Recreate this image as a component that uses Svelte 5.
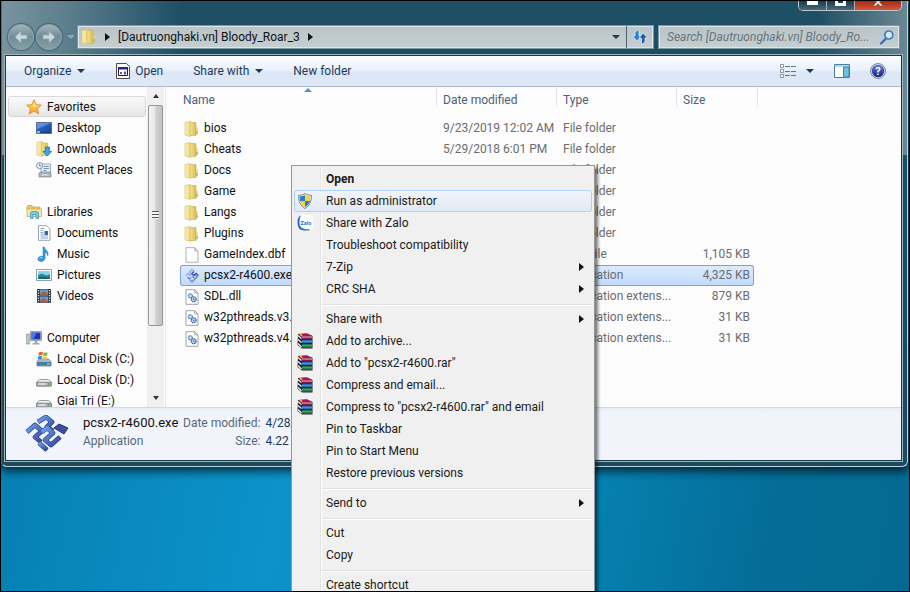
<script lang="ts">
  type NavItem = { label: string; icon: string };
  type NavGroup = NavItem & { active?: boolean; children: NavItem[] };
  type FileRow = { name: string; icon: string; date?: string; type: string; size?: string };
  type MenuItem = { label: string; icon?: string; bold?: boolean; submenu?: boolean };

  const navGroups: NavGroup[] = [
    {
      label: "Favorites",
      icon: "star",
      active: true,
      children: [
        { label: "Desktop", icon: "desktop" },
        { label: "Downloads", icon: "downloads" },
        { label: "Recent Places", icon: "recent" },
      ],
    },
    {
      label: "Libraries",
      icon: "libraries",
      children: [
        { label: "Documents", icon: "documents" },
        { label: "Music", icon: "music" },
        { label: "Pictures", icon: "pictures" },
        { label: "Videos", icon: "videos" },
      ],
    },
    {
      label: "Computer",
      icon: "computer",
      children: [
        { label: "Local Disk (C:)", icon: "system-disk" },
        { label: "Local Disk (D:)", icon: "disk" },
        { label: "Giai Tri (E:)", icon: "disk" },
      ],
    },
  ];

  const files: FileRow[] = [
    { name: "bios", icon: "folder", date: "9/23/2019 12:02 AM", type: "File folder" },
    { name: "Cheats", icon: "folder", date: "5/29/2018 6:01 PM", type: "File folder" },
    { name: "Docs", icon: "folder", type: "File folder" },
    { name: "Game", icon: "folder", type: "File folder" },
    { name: "Langs", icon: "folder", type: "File folder" },
    { name: "Plugins", icon: "folder", type: "File folder" },
    { name: "GameIndex.dbf", icon: "file", type: "DBF File", size: "1,105 KB" },
    { name: "pcsx2-r4600.exe", icon: "pcsx", type: "Application", size: "4,325 KB" },
    { name: "SDL.dll", icon: "dll", type: "Application extens...", size: "879 KB" },
    { name: "w32pthreads.v3.dll", icon: "dll", type: "Application extens...", size: "31 KB" },
    { name: "w32pthreads.v4.dll", icon: "dll", type: "Application extens...", size: "31 KB" },
  ];

  const menuGroups: MenuItem[][] = [
    [
      { label: "Open", bold: true },
      { label: "Run as administrator", icon: "shield" },
      { label: "Share with Zalo", icon: "zalo" },
      { label: "Troubleshoot compatibility" },
      { label: "7-Zip", submenu: true },
      { label: "CRC SHA", submenu: true },
    ],
    [
      { label: "Share with", submenu: true },
      { label: "Add to archive...", icon: "rar" },
      { label: 'Add to "pcsx2-r4600.rar"', icon: "rar" },
      { label: "Compress and email...", icon: "rar" },
      { label: 'Compress to "pcsx2-r4600.rar" and email', icon: "rar" },
      { label: "Pin to Taskbar" },
      { label: "Pin to Start Menu" },
      { label: "Restore previous versions" },
    ],
    [{ label: "Send to", submenu: true }],
    [{ label: "Cut" }, { label: "Copy" }],
    [{ label: "Create shortcut" }],
  ];

  let selected = $state("pcsx2-r4600.exe");
  let highlighted = $state("Run as administrator");
  let search = $state("");
</script>

{#snippet icon(name: string)}
  <svg class="icon" viewBox="0 0 16 16" aria-hidden="true">
    {#if name === "folder"}
      <path d="M1 1.5l5-1 1 1v13l-1 1-5-1.5z" fill="url(#folder-light)" stroke="#d9bd5e" stroke-width=".6" />
      <path d="M6 1.500h6v13H6z" fill="url(#folder-dark)" stroke="#ceb04e" stroke-width=".6" />
      <path d="M12 6.5h1.600v7H12z" fill="#e4cc70" />
      <path d="M12.500 10h1v3h-1z" fill="#7fb27a" />
    {:else if name === "file"}
      <path d="M2 .7h8.6L14 4v11.3H2z" fill="#fff" stroke="#9a9a9a" stroke-width=".8" />
      <path d="M10.6.7V4H14z" fill="#e6e6e6" stroke="#9a9a9a" stroke-width=".6" />
    {:else if name === "dll"}
      <path d="M2 .7h8.6L14 4v11.3H2z" fill="#fff" stroke="#8d8d8d" stroke-width=".8" />
      <path d="M10.6.7V4H14z" fill="#e6e6e6" stroke="#8d8d8d" stroke-width=".6" />
      <circle cx="6.3" cy="6.8" r="2" fill="#cfe0f1" stroke="#3f6fa5" stroke-width="1.1" stroke-dasharray="1.2 .5" />
      <circle cx="9.7" cy="10.3" r="2.4" fill="#cfe0f1" stroke="#2c5c98" stroke-width="1.3" stroke-dasharray="1.3 .5" />
      <circle cx="9.7" cy="10.3" r=".8" fill="#2c5c98" />
    {:else if name === "pcsx"}
      <g fill="none" stroke-width="1.4">
        <path d="M2 7.5l2-2 2 2 1.5-1.5-2-2L8 1.5l2 2" stroke="#8fb0e2" />
        <path d="M10 3.5L8 5.5l2 2 2-2 2.5 2" stroke="#3850a4" />
        <path d="M3.5 9l2 2L7 9.5M6 12l2 2 5.5-5.5-2-1M8 8l2.5 2.5" stroke="#7688c6" />
      </g>
    {:else if name === "star"}
      <path d="M8 .8l2.1 4.9 5.3.4-4 3.5 1.3 5.3L8 12.1l-4.7 2.8 1.3-5.3-4-3.5 5.3-.4z" fill="url(#star)" stroke="#e2892b" stroke-width=".9" stroke-linejoin="round" />
      <path d="M8 3l1.3 3.6 3.6.3-6 1.4z" fill="#fff3b0" opacity=".8" />
    {:else if name === "desktop"}
      <path d="M.5 2.5h15v11H.5z" fill="url(#screen)" stroke="#5d7089" />
      <path d="M1 3h14L1 9z" fill="#7aa9ee" opacity=".6" />
      <path d="M1 11.5h14V13H1z" fill="#24436d" />
      <path d="M1 11h3v2H1z" fill="#6bc6de" />
    {:else if name === "downloads"}
      <path d="M1 1.5l5-1 1 1v13l-1 1-5-1.5z" fill="url(#folder-light)" stroke="#d9bd5e" stroke-width=".6" />
      <path d="M6 2h5.5v12.5H6z" fill="url(#folder-dark)" stroke="#ceb04e" stroke-width=".6" />
      <path d="M9.3 6h4v4.5h2.2L11.3 15 7 10.5h2.3z" fill="#3aa3ea" stroke="#1b6bb4" stroke-width=".8" />
    {:else if name === "recent"}
      <path d="M5 2h9.5v9H5z" fill="#e9eef3" stroke="#8795a3" stroke-width=".8" />
      <path d="M7.5 4.5h5.5M7.5 6.5h5.5M7.5 8.5h3" stroke="#7396bd" stroke-width="1" />
      <path d="M3 11l2-1h9l1 1v4H3z" fill="#a8b1b8" stroke="#7f8a92" stroke-width=".7" />
      <path d="M5.5 13h7" stroke="#eef2f4" />
      <circle cx="3.6" cy="3.6" r="3" fill="#f3f6f8" stroke="#8493a0" />
      <path d="M3.6 1.8v2h1.5" fill="none" stroke="#4a6b8c" stroke-width=".8" />
    {:else if name === "libraries"}
      <path d="M1 2.5l1-1h4l1 1.5h7v3H1z" fill="#e7c965" stroke="#c2a143" stroke-width=".7" />
      <path d="M1 5h14.5v7.5H1z" fill="#f6e59c" stroke="#c9a94c" stroke-width=".7" />
      <path d="M4.5 14.5V9.5q0-2 2-2h4q2 0 2 2v5h-2.5v-4h-3v4z" fill="#78c7ea" stroke="#3c8fbd" stroke-width=".7" />
    {:else if name === "documents"}
      <path d="M2.5.7h8L14 4v11.3H2.5z" fill="#fff" stroke="#7e8c9b" stroke-width=".8" />
      <path d="M4.5 3.5h4M4.5 5.5h3M4.5 11h7.5M4.5 13h7.5M4.5 7.5h3M4.5 9.2h3" stroke="#7f9bc4" stroke-width=".9" />
      <path d="M8.5 6H12v4H8.5z" fill="#2c69bd" />
    {:else if name === "music"}
      <path d="M8 1c.4 2.6 5 3.8 3.7 8.5C11.5 7 10 6 9 6v6.2C9 14 7.200 15.300 5.200 15.300S2 14.300 2 12.900s1.700-2.600 3.500-2.600c.7 0 1.200.1 1.700.3V1z" fill="#2f9be0" stroke="#1b6fb5" stroke-width=".7" />
      <path d="M3.300 12.500q1-1.400 3-1" fill="none" stroke="#b4e3fb" />
    {:else if name === "pictures"}
      <path d="M.5 2.500h15v11H.5z" fill="#fff" stroke="#8492a0" stroke-width=".9" />
      <path d="M2 4h12v8H2z" fill="#8fd0ea" />
      <path d="M2 8l4-1.500 4 2 4-1v4.500H2z" fill="#2b8c8d" />
      <path d="M2 10.500l6-1 6 1V12H2z" fill="#1a6482" />
    {:else if name === "videos"}
      <path d="M1 1h14v14H1z" fill="#2d3642" />
      <path d="M4 1.500h8v6H4zM4 8.500h8v6H4z" fill="#5d9fd6" />
      <path d="M4 6l4-3 4 3v1.500H4zM4 13l3-3 5 3v1.500H4z" fill="#b25b3f" />
      <path d="M2.500 2v13M13.500 2v13" stroke="#e3e8ec" stroke-width="1.300" stroke-dasharray="1.300 1.200" />
    {:else if name === "computer"}
      <path d="M.7 4h2.600v10H.7z" fill="#c8d2c9" stroke="#7b8d80" stroke-width=".7" />
      <path d="M4.500 1.500h11v9h-11z" fill="#d6dce2" stroke="#8791a0" stroke-width=".8" />
      <path d="M5.500 2.500h9v7h-9z" fill="#1a35b5" />
      <path d="M5.500 2.500h5l-3 7h-2z" fill="#4d77dd" />
      <path d="M8.500 10.500h3v2.500h-3zM6.500 13h7v1.500h-7z" fill="#a3acb5" />
    {:else if name === "system-disk"}
      <path d="M1 10.500L3.500 8h9L15 10.500V15H1z" fill="#aebac3" stroke="#6d7b87" stroke-width=".8" />
      <path d="M1 11h14v3.500H1z" fill="#3f7fa9" />
      <path d="M11 12h3v1.500h-3z" fill="#7fe05f" />
      <path d="M3 1.300q2-1 4 0L6.300 4.500q-2-.8-4 0z" fill="#e8662d" />
      <path d="M7.700 1.300q2 .9 4 0L11 4.500q-2 .9-4 0z" fill="#7dbb3c" />
      <path d="M2.200 5.200q2-.9 4 0L5.500 8.300q-2-.8-4 0z" fill="#3d8be0" />
      <path d="M6.900 5.200q2 .9 4 0l-.7 3.200q-2 .8-4 0z" fill="#f2c230" />
    {:else if name === "disk"}
      <path d="M.8 10L3.500 7.500h9L15.200 10v4H.8z" fill="#eceeef" stroke="#84898d" stroke-width=".8" />
      <path d="M.8 10.300h14.400V14H.8z" fill="#b9bdc0" stroke="#6f7478" stroke-width=".8" />
      <path d="M2.500 11.500h7v1h-7z" fill="#f5f6f6" />
      <path d="M11.500 11h2v2h-2z" fill="#4fae3a" />
    {:else if name === "shield"}
      <path d="M8 .5c2 1.300 4.300 1.800 6.500 1.800 0 6-1.500 10-6.500 13.200C3 12.300 1.500 8.300 1.500 2.300 3.700 2.300 6 1.800 8 .5z" fill="#e4e9ed" stroke="#6f7e89" stroke-width=".9" />
      <path d="M8 2.300v5.700H3C2.800 6.600 2.700 5 2.700 3.400 4.700 3.400 6.400 3 8 2.300z" fill="#2f7cc0" />
      <path d="M8 2.300v5.700h5c.2-1.400.3-3 .3-4.600-2 0-3.700-.4-5.300-1.100z" fill="#f4d43b" />
      <path d="M8 8v6c-2.800-1.700-4.300-3.600-5-6z" fill="#f4d43b" />
      <path d="M8 8v6c2.800-1.700 4.300-3.600 5-6z" fill="#2f7cc0" />
    {:else if name === "zalo"}
      <path d="M3 0h10q3 0 3 3v9q0 3-3 3H5z" fill="#fff" />
      <path d="M3.500.7Q.8 2 .8 7t2 7q4 2.200 10 .8-5-.1-8-1.600Q2 11.500 2 7.200T3.500.7z" fill="#1b62d3" stroke="#1b62d3" stroke-width=".5" />
      <text x="3.500" y="9.500" font-size="5.500" font-weight="700" fill="#2a74e0">Zalo</text>
    {:else if name === "rar"}
      <path d="M1 1l9-.5 5.500 2.500v12.500H5L.5 12z" fill="#26232a" />
      <path d="M1 1l9-.5L15.500 3H5z" fill="#b01258" />
      <path d="M3 .9l2 2" stroke="#f0ca25" stroke-width="1.600" />
      <path d="M5 3.200h10v2.300H5z" fill="#c91d68" />
      <path d="M5 4h10M5 8.300h10M5 12.700h10" stroke="#e8dce6" stroke-width=".7" />
      <path d="M5 6.800h10v1.200H5zM5 8.800h10v1.200H5z" fill="#2670b5" />
      <path d="M5 11.300h10v1.100H5zM5 13.200h10v1.300H5z" fill="#239253" />
      <path d="M1 2.500l3.500 3M1 6.500l3.500 3M1 10.500l3.500 3.500" stroke="#f2f2f2" stroke-width="1.300" />
    {:else if name === "program"}
      <path d="M1.500.5h10l3 3v12h-13z" fill="#fff" stroke="#4d4d4d" />
      <path d="M3.500 4.500h9v8h-9z" fill="#fff" stroke="#171b3f" />
      <path d="M3 4h10v2.500H3z" fill="#1b2a86" />
      <path d="M5 9h2v2H5z" fill="#c93c3c" />
      <path d="M9 8.500h2v3H9z" fill="#2b58be" />
    {:else if name === "views"}
      <path d="M.5 1.500h3v3h-3zM.5 6.500h3v3h-3zM.5 11.500h3v3h-3z" fill="#fff" stroke="#8794a5" />
      <path d="M5 3.500h5M5 8.500h5M5 12.500h5M11 3.500h5M11 8.500h5M11 12.500h5" stroke="#5f7290" />
    {:else if name === "preview"}
      <path d="M.5 1.500h15v13H.5z" fill="#fff" stroke="#4a7fa5" />
      <path d="M1 2h14v2H1z" fill="#bfd6e6" />
      <path d="M9.500 4H15v10H9.500z" fill="#6fc0df" stroke="#3d87ab" />
    {:else if name === "help"}
      <circle cx="8" cy="8" r="7.500" fill="#d5dbe8" stroke="#7c86a0" />
      <circle cx="8" cy="8" r="6.200" fill="url(#help)" />
      <text x="8" y="12" font-size="11" font-weight="700" fill="#fff" text-anchor="middle">?</text>
    {:else if name === "refresh"}
      <path d="M6.500.5L3 3v4H.5L5 12l4.500-5H7V4z" fill="#2f7fd0" stroke="#e8f3fc" stroke-width=".7" />
      <path d="M9.500 15.500l3.500-2.500V9h2.500L11 4 7 9h2.500v3z" fill="#1d5dae" stroke="#e8f3fc" stroke-width=".7" />
    {:else if name === "magnifier"}
      <path d="M7 9.500L2 14.500" stroke="#3d70b7" stroke-width="2.400" stroke-linecap="round" />
      <circle cx="9.800" cy="6" r="4" fill="#d8ecf8" stroke="#3b7cc4" stroke-width="1.700" />
    {/if}
  </svg>
{/snippet}

<svg class="defs" aria-hidden="true">
  <defs>
    <linearGradient id="folder-light" x2="1">
      <stop offset="0" stop-color="#fbf1b6" />
      <stop offset="1" stop-color="#ecd77c" />
    </linearGradient>
    <linearGradient id="folder-dark" x2="1">
      <stop offset="0" stop-color="#f5e596" />
      <stop offset="1" stop-color="#d8b953" />
    </linearGradient>
    <linearGradient id="star" x2="0" y2="1">
      <stop offset="0" stop-color="#ffe36b" />
      <stop offset="1" stop-color="#fb9f26" />
    </linearGradient>
    <linearGradient id="screen" x2="1" y2="1">
      <stop offset="0" stop-color="#3b78d8" />
      <stop offset="1" stop-color="#163f9b" />
    </linearGradient>
    <linearGradient id="help" x2="0" y2="1">
      <stop offset="0" stop-color="#5e7fd6" />
      <stop offset="1" stop-color="#10227e" />
    </linearGradient>
    <linearGradient id="logo" x2="1" y2="1">
      <stop offset="0" stop-color="#6fa3e8" />
      <stop offset="1" stop-color="#33459b" />
    </linearGradient>
  </defs>
</svg>

<main class="desktop">
  <div class="window">
    <div class="title-bar">
      <div class="window-controls">
        <button aria-label="Minimize"><span class="glyph-min"></span></button>
        <button aria-label="Maximize"><span class="glyph-max"></span></button>
        <button class="close" aria-label="Close">
          <svg viewBox="0 0 12 9" width="12" height="9"><path d="M3 0l1.500 1L1 5h3l2-2.500L8 5h3L7.500 1 9 0z" fill="#fff" stroke="#5b4747" stroke-width=".6" /></svg>
        </button>
      </div>
    </div>

    <div class="nav-bar">
      <div class="travel">
        <button class="round" aria-label="Back">
          <svg viewBox="0 0 16 16" width="16" height="16"><path d="M8 2L2 8l6 6v-4h6V6H8z" fill="#c9d6db" stroke="#8fa6af" stroke-width=".8" /></svg>
        </button>
        <button class="round" aria-label="Forward">
          <svg viewBox="0 0 16 16" width="16" height="16"><path d="M8 2l6 6-6 6v-4H2V6h6z" fill="#c9d6db" stroke="#8fa6af" stroke-width=".8" /></svg>
        </button>
        <button class="recent" aria-label="Recent pages"><span class="caret"></span></button>
      </div>
      <div class="address">
        {@render icon("folder")}
        <span class="crumb-arrow"></span>
        <span class="crumb">[Dautruonghaki.vn] Bloody_Roar_3</span>
        <span class="crumb-arrow"></span>
        <button class="history" aria-label="Previous locations"><span class="caret"></span></button>
        <button class="refresh" aria-label="Refresh">{@render icon("refresh")}</button>
      </div>
      <label class="search">
        <input
          type="text"
          aria-label="Search folder"
          placeholder="Search [Dautruonghaki.vn] Bloody_Ro..."
          bind:value={search}
        />
        {@render icon("magnifier")}
      </label>
    </div>

    <div class="client">
      <div class="toolbar">
        <button>Organize <span class="caret"></span></button>
        <button class="open">{@render icon("program")} Open</button>
        <button>Share with <span class="caret"></span></button>
        <button>New folder</button>
        <div class="toolbar-end">
          <button class="views" aria-label="Change your view">{@render icon("views")}<span class="caret"></span></button>
          <button aria-label="Show the preview pane">{@render icon("preview")}</button>
          <button aria-label="Get help">{@render icon("help")}</button>
        </div>
      </div>

      <div class="panes">
        <nav class="tree">
          {#each navGroups as group}
            <div class="tree-group">
              <a class="tree-head" class:active={group.active} href="#{group.icon}">
                {@render icon(group.icon)}{group.label}
              </a>
              {#each group.children as item}
                <a class="tree-item" href="#{item.icon}">{@render icon(item.icon)}{item.label}</a>
              {/each}
            </div>
          {/each}
        </nav>
        <div class="scrollbar" aria-hidden="true">
          <span class="scroll-arrow up"></span>
          <div class="thumb"><span class="grip"></span></div>
          <span class="scroll-arrow down"></span>
        </div>

        <div class="files">
          <table>
            <colgroup>
              <col class="col-name" />
              <col class="col-date" />
              <col class="col-type" />
              <col class="col-size" />
            </colgroup>
            <thead>
              <tr>
                <th class="sorted">Name</th>
                <th>Date modified</th>
                <th>Type</th>
                <th>Size</th>
              </tr>
            </thead>
            <tbody>
              {#each files as file}
                <tr class:selected={file.name === selected} onclick={() => (selected = file.name)}>
                  <td><span class="file-name">{@render icon(file.icon)}{file.name}</span></td>
                  <td>{file.date ?? ""}</td>
                  <td>{file.type}</td>
                  <td>{file.size ?? ""}</td>
                </tr>
              {/each}
            </tbody>
          </table>
        </div>
      </div>

      <div class="details">
        <svg class="logo" viewBox="0 0 44 38" aria-hidden="true">
          <g fill="none" stroke="#26357c" stroke-width="4.800" stroke-linejoin="round">
            <path d="M2 17l8-7 7 6-7 6 6 5" />
            <path d="M13 7l8-5 6 5-5 5 6 4" />
            <path d="M17 17l5-4 6 5-8 7 6 5 9-8" />
            <path d="M14 28l8 7" />
          </g>
          <g fill="none" stroke="url(#logo)" stroke-width="3.600" stroke-linejoin="round">
            <path d="M2 17l8-7 7 6-7 6 6 5" />
            <path d="M13 7l8-5 6 5-5 5 6 4" />
            <path d="M17 17l5-4 6 5-8 7 6 5 9-8" />
            <path d="M14 28l8 7" />
          </g>
          <path d="M29 13l5-4 9 4-4 6z" fill="#3b4fa8" stroke="#26357c" />
        </svg>
        <div class="details-name">
          <strong>{selected}</strong>
          <span>Application</span>
        </div>
        <dl>
          <dt>Date modified:</dt>
          <dd>4/28/</dd>
          <dt>Size:</dt>
          <dd>4.22</dd>
        </dl>
      </div>
    </div>
  </div>

  <div class="context-menu" role="menu">
    {#each menuGroups as group}
      <div class="menu-group" role="group">
        {#each group as item}
          <button
            class="menu-item"
            class:bold={item.bold}
            class:highlighted={item.label === highlighted}
            role="menuitem"
            onmouseenter={() => (highlighted = item.label)}
          >
            <span class="menu-icon">
              {#if item.icon}{@render icon(item.icon)}{/if}
            </span>
            <span class="menu-label">{item.label}</span>
            {#if item.submenu}<span class="crumb-arrow"></span>{/if}
          </button>
        {/each}
      </div>
    {/each}
  </div>
</main>

<style>
  :global(body) {
    margin: 0;
  }

  .desktop {
    position: relative;
    box-sizing: border-box;
    height: 100vh;
    overflow: hidden;
    border: 1px solid #000;
    background: linear-gradient(100deg, #067aac 0%, #0b93ca 36%, #0683b4 65%, #046d97 85%, #046a93 100%);
    font-family: Roboto, "Noto Sans", sans-serif;
    font-size: 12px;
    line-height: 16px;
    color: #1a1a1a;
  }

  button {
    margin: 0;
    padding: 0;
    border: 0;
    background: none;
    font: inherit;
    color: inherit;
    display: flex;
    align-items: center;
  }

  .defs {
    position: absolute;
    width: 0;
    height: 0;
  }

  .icon {
    display: block;
    width: 16px;
    height: 16px;
    flex-shrink: 0;
  }

  .caret {
    border: 4px solid transparent;
    border-top-color: #1e395b;
    border-bottom: 0;
  }

  .crumb-arrow {
    border: 4px solid transparent;
    border-left: 5px solid #111;
    border-right: 0;
    flex-shrink: 0;
  }

  .window {
    box-sizing: border-box;
    display: flex;
    flex-direction: column;
    height: calc(100vh - 126px);
    margin-right: 1px;
    padding: 0 4px 4px 2px;
    border: 1px solid #c3d3da;
    border-top: 0;
    border-left-color: #47707f;
    border-radius: 0 0 6px 6px;
    background:
      linear-gradient(to right, #7893a0 0, #5f808e 60px, transparent 180px, transparent calc(100% - 90px), #6b8792 100%) no-repeat 0 0 / 100% 154px,
      linear-gradient(#1d4f65, #1b4a5e);
    box-shadow: 0 2px 10px 2px rgba(0, 0, 0, 0.7);
  }

  .title-bar {
    display: flex;
    justify-content: flex-end;
    height: 24px;
  }

  .window-controls {
    display: flex;
    height: 9px;
    margin-right: 1px;
    border: 1px solid #b9c8ce;
    border-top: 0;
    border-radius: 0 0 5px 5px;
    overflow: hidden;
  }

  .window-controls button {
    width: 28px;
    justify-content: center;
    align-items: flex-start;
    border-right: 1px solid #a3b3ba;
    background: linear-gradient(#1c3a49, #4b6876);
    box-sizing: border-box;
  }

  .window-controls .close {
    width: 46px;
    border-right: 0;
    background: linear-gradient(#a52a15, #d2573b);
  }

  .glyph-min {
    width: 11px;
    height: 4px;
    background: #fff;
  }

  .glyph-max {
    width: 5px;
    height: 2px;
    border: 3px solid #fff;
    border-top: 0;
  }

  .nav-bar {
    display: flex;
    height: 24px;
    margin-bottom: 5px;
    padding: 0 3px 0 4px;
    gap: 4px;
  }

  .travel {
    display: flex;
    align-items: center;
    gap: 2px;
    width: 65px;
  }

  .round {
    width: 26px;
    height: 26px;
    justify-content: center;
    border: 1px solid #8ea5ae;
    border-radius: 50%;
    background: linear-gradient(#a3b5bc, #6f8b97 50%, #86a0aa);
    box-shadow: 0 0 1px 1px #456776;
    flex-shrink: 0;
  }

  .recent {
    margin-left: 3px;
  }

  .recent .caret {
    border-top-color: #91a8b2;
  }

  .address,
  .search {
    box-sizing: border-box;
    display: flex;
    align-items: center;
    border: 1px solid #7c98a4;
    box-shadow: inset 0 0 0 1px #dde5e8;
    background: linear-gradient(#b8c4c8, #c6cfd2);
    color: #111;
  }

  .address {
    flex: 1;
    padding-left: 3px;
  }

  .address > .crumb-arrow {
    margin: 0 8px;
  }

  .history {
    height: 100%;
    margin-left: auto;
    padding: 0 6px;
    border-right: 1px solid #456776;
  }

  .refresh {
    padding: 0 5px;
  }

  .search {
    width: 242px;
    padding: 0 4px 0 8px;
  }

  .search input {
    flex: 1;
    min-width: 0;
    padding: 0;
    border: 0;
    outline: 0;
    background: none;
    font: inherit;
    font-style: italic;
  }

  .search input::placeholder {
    color: #66757c;
    opacity: 1;
  }

  .client {
    display: flex;
    flex-direction: column;
    flex: 1;
    min-height: 0;
    border: 1px solid #9fb4bd;
    box-shadow: inset 0 0 0 1px #173845;
    padding: 1px;
    background: #fcfcfc;
  }

  .toolbar {
    display: flex;
    align-items: center;
    height: 30px;
    padding: 0 15px 0 18px;
    border-bottom: 1px solid #a9bbd3;
    background: linear-gradient(#fbfdff, #eaf1fb 45%, #dce7f5 55%, #dfe8f6);
    color: #1e395b;
    gap: 30px;
  }

  .toolbar button {
    gap: 6px;
    white-space: nowrap;
  }

  .toolbar .open {
    gap: 4px;
  }

  .toolbar-end {
    display: flex;
    align-items: center;
    gap: 20px;
    margin-left: auto;
  }

  .toolbar .views {
    gap: 10px;
  }

  .panes {
    display: flex;
    flex: 1;
    min-height: 0;
  }

  .tree {
    display: flex;
    flex-direction: column;
    gap: 21px;
    width: 140px;
    padding: 9px 0 0 2px;
    box-sizing: border-box;
    overflow: hidden;
    flex-shrink: 0;
  }

  .tree a {
    display: flex;
    align-items: center;
    height: 21px;
    gap: 5px;
    box-sizing: border-box;
    border: 1px solid transparent;
    color: #111;
    text-decoration: none;
    white-space: nowrap;
  }

  .tree .tree-head {
    padding-left: 17px;
  }

  .tree .tree-head.active {
    border-color: #d9d9d9;
    border-radius: 3px;
    background: linear-gradient(#fafafa, #e6e6e6);
  }

  .tree .tree-item {
    padding-left: 27px;
  }

  .scrollbar {
    display: flex;
    flex-direction: column;
    align-items: center;
    width: 17px;
    margin: 0 1px 0 1px;
    background: #f0f0f0;
    flex-shrink: 0;
  }

  .scroll-arrow {
    height: 18px;
    display: flex;
    align-items: center;
  }

  .scroll-arrow::before {
    content: "";
    border: 3px solid transparent;
  }

  .scroll-arrow.up::before {
    border-bottom: 4px solid #333;
    border-top: 0;
  }

  .scroll-arrow.down::before {
    border-top: 4px solid #333;
    border-bottom: 0;
  }

  .scroll-arrow.down {
    margin-top: auto;
  }

  .thumb {
    box-sizing: border-box;
    width: 15px;
    height: 69%;
    display: flex;
    align-items: center;
    justify-content: center;
    border: 1px solid #979797;
    border-radius: 2px;
    background: linear-gradient(to right, #f5f5f5, #e6e6e6 45%, #cfcfd1 55%, #c4c4c8);
  }

  .grip {
    width: 7px;
    height: 8px;
    background: repeating-linear-gradient(#555 0 1px, #f4f4f4 1px 3px);
  }

  .files {
    flex: 1;
    min-width: 0;
    padding-left: 14px;
    border-left: 1px solid #e3eaf3;
  }

  table {
    width: 574px;
    table-layout: fixed;
    border-collapse: separate;
    border-spacing: 0;
  }

  .col-name {
    width: 257px;
  }

  .col-date,
  .col-type {
    width: 120px;
  }

  th {
    position: relative;
    height: 25px;
    padding: 0 0 6px 6px;
    box-sizing: border-box;
    text-align: left;
    font-weight: 400;
    color: #4c607a;
  }

  th:first-child {
    padding-left: 3px;
  }

  th::after {
    content: "";
    position: absolute;
    top: 0;
    right: 0;
    width: 1px;
    height: 20px;
    background: #dfe6ef;
  }

  th:last-child::after {
    right: -4px;
  }

  thead tr {
    height: 31px;
  }

  .sorted::before {
    content: "";
    position: absolute;
    top: 1px;
    left: 50%;
    margin-left: -5px;
    border: 4px solid transparent;
    border-top: 0;
    border-bottom-color: #5b93b0;
  }

  td {
    height: 21px;
    box-sizing: border-box;
    padding: 0 0 0 6px;
    border: 1px solid transparent;
    border-width: 1px 0;
    color: #6d6d6d;
    line-height: 19px;
    white-space: nowrap;
  }

  td:first-child {
    padding-left: 3px;
    border-left-width: 1px;
    color: #111;
  }

  td:last-child {
    padding-right: 3px;
    border-right-width: 1px;
    text-align: right;
  }

  .file-name {
    display: flex;
    align-items: center;
    gap: 4px;
  }

  .selected td {
    border-color: #7da2ce;
    background: linear-gradient(#dcebfc, #c1dbfc);
  }

  .selected td:first-child {
    border-radius: 3px 0 0 3px;
  }

  .selected td:last-child {
    border-radius: 0 3px 3px 0;
  }

  .details {
    display: flex;
    height: 52px;
    padding-left: 19px;
    border-top: 1px solid #ccd9ea;
    background: linear-gradient(#e9eef8, #f1f5fb 5px);
    color: #5a6779;
  }

  .logo {
    width: 44px;
    height: 38px;
    margin: 7px 14px 0 0;
  }

  .details-name {
    display: flex;
    flex-direction: column;
    width: 100px;
    padding-top: 6px;
    line-height: 18px;
  }

  .details-name strong {
    font-size: 13px;
    font-weight: 400;
    color: #111;
  }

  dl {
    display: grid;
    grid-template-columns: auto auto;
    align-content: start;
    gap: 0 5px;
    margin: 0;
    padding-top: 6px;
    line-height: 18px;
    text-align: right;
  }

  dd {
    margin: 0;
    color: #1e395b;
    text-align: left;
  }

  .context-menu {
    position: absolute;
    top: 164px;
    left: 290px;
    box-sizing: border-box;
    width: 304px;
    padding: 2px;
    border: 1px solid #979797;
    background: linear-gradient(to right, #f0f0f0 28px, #e2e3e3 28px 29px, #fff 29px 30px, #f0f0f0 30px);
    box-shadow: 3px 3px 3px rgba(0, 0, 0, 0.5);
  }

  .menu-group + .menu-group::before {
    content: "";
    display: block;
    height: 1px;
    margin: 4px 0 2px 28px;
    border-bottom: 1px solid #fff;
    background: #e0e0e0;
  }

  .menu-item {
    box-sizing: border-box;
    width: 100%;
    height: 22px;
    padding-right: 7px;
    border: 1px solid transparent;
    border-radius: 3px;
    text-align: left;
  }

  .menu-item.bold {
    font-weight: 700;
  }

  .menu-item.highlighted {
    border-color: #aecff7;
    background: linear-gradient(rgba(241, 245, 251, 0.9), rgba(222, 232, 245, 0.9));
  }

  .menu-icon {
    width: 29px;
    padding-left: 2px;
    flex-shrink: 0;
  }

  .menu-label {
    flex: 1;
    white-space: nowrap;
  }
</style>
